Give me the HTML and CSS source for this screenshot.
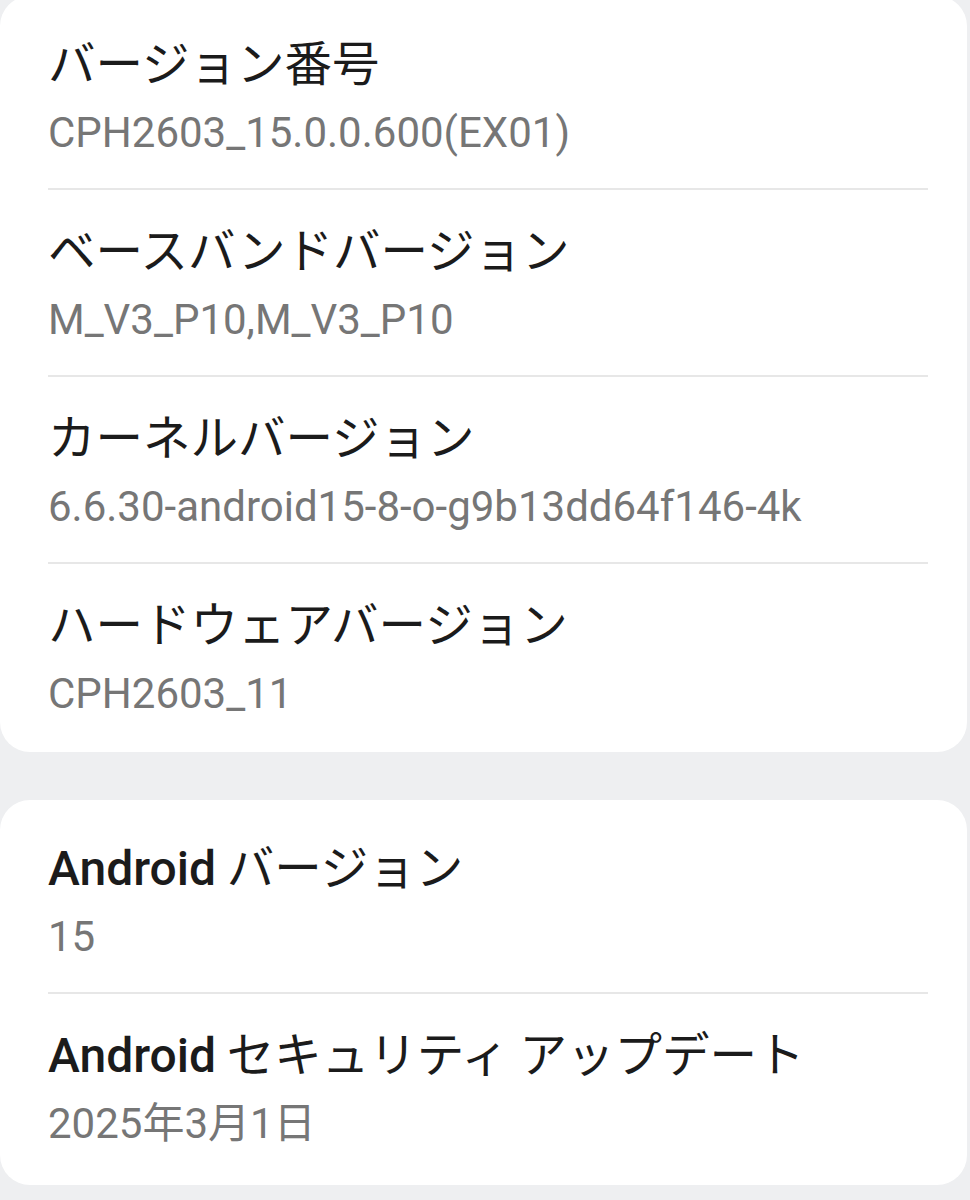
FILE: index.html
```html
<!DOCTYPE html>
<html lang="ja">
<head>
<meta charset="utf-8">
<title>デバイス情報</title>
<link rel="stylesheet" href="styles.css">
</head>
<body>
<main class="page">
  <section class="card card-first">
    <div class="row">
      <div class="title">バージョン番号</div>
      <div class="value">CPH2603_15.0.0.600(EX01)</div>
    </div>
    <div class="divider"></div>
    <div class="row">
      <div class="title">ベースバンドバージョン</div>
      <div class="value">M_V3_P10,M_V3_P10</div>
    </div>
    <div class="divider"></div>
    <div class="row">
      <div class="title">カーネルバージョン</div>
      <div class="value">6.6.30-android15-8-o-g9b13dd64f146-4k</div>
    </div>
    <div class="divider"></div>
    <div class="row">
      <div class="title">ハードウェアバージョン</div>
      <div class="value">CPH2603_11</div>
    </div>
  </section>
  <section class="card card-last">
    <div class="row">
      <div class="title"><span class="latin">Android</span> バージョン</div>
      <div class="value">15</div>
    </div>
    <div class="divider"></div>
    <div class="row">
      <div class="title"><span class="latin">Android</span> セキュリティ アップデート</div>
      <div class="value">2025年3月1日</div>
    </div>
  </section>
</main>
</body>
</html>
```

FILE: styles.css
```css
html, body {
  margin: 0;
  padding: 0;
  background: #eeeff1;
}

body {
  width: 970px;
  height: 1200px;
  overflow: hidden;
  font-family: Roboto, "Noto Sans CJK JP", sans-serif;
}

.page {
  display: flex;
  flex-direction: column;
  gap: 48px;
}

.card {
  background: #ffffff;
  border-radius: 30px;
  margin-right: 3px;
  padding: 7px 0 3px 0;
}

.card-first {
  margin-top: -4px;
}

.card-last {
  padding-bottom: 6px;
}

.row {
  padding: 26px 48px 15px 48px;
}

.title {
  font-family: "Noto Sans CJK JP", sans-serif;
  font-size: 47.5px;
  line-height: 64px;
  height: 64px;
  color: #1b1b1b;
  white-space: nowrap;
}

.latin {
  font-family: Roboto, sans-serif;
  font-weight: 500;
  font-size: 48px;
  line-height: 1;
}

.value {
  font-family: Roboto, "Noto Sans CJK JP", sans-serif;
  font-size: 42px;
  line-height: 80px;
  height: 80px;
  color: #767676;
  white-space: nowrap;
}

.divider {
  height: 2px;
  margin: 0 39px 0 48px;
  background: #e7e7e7;
}
```
